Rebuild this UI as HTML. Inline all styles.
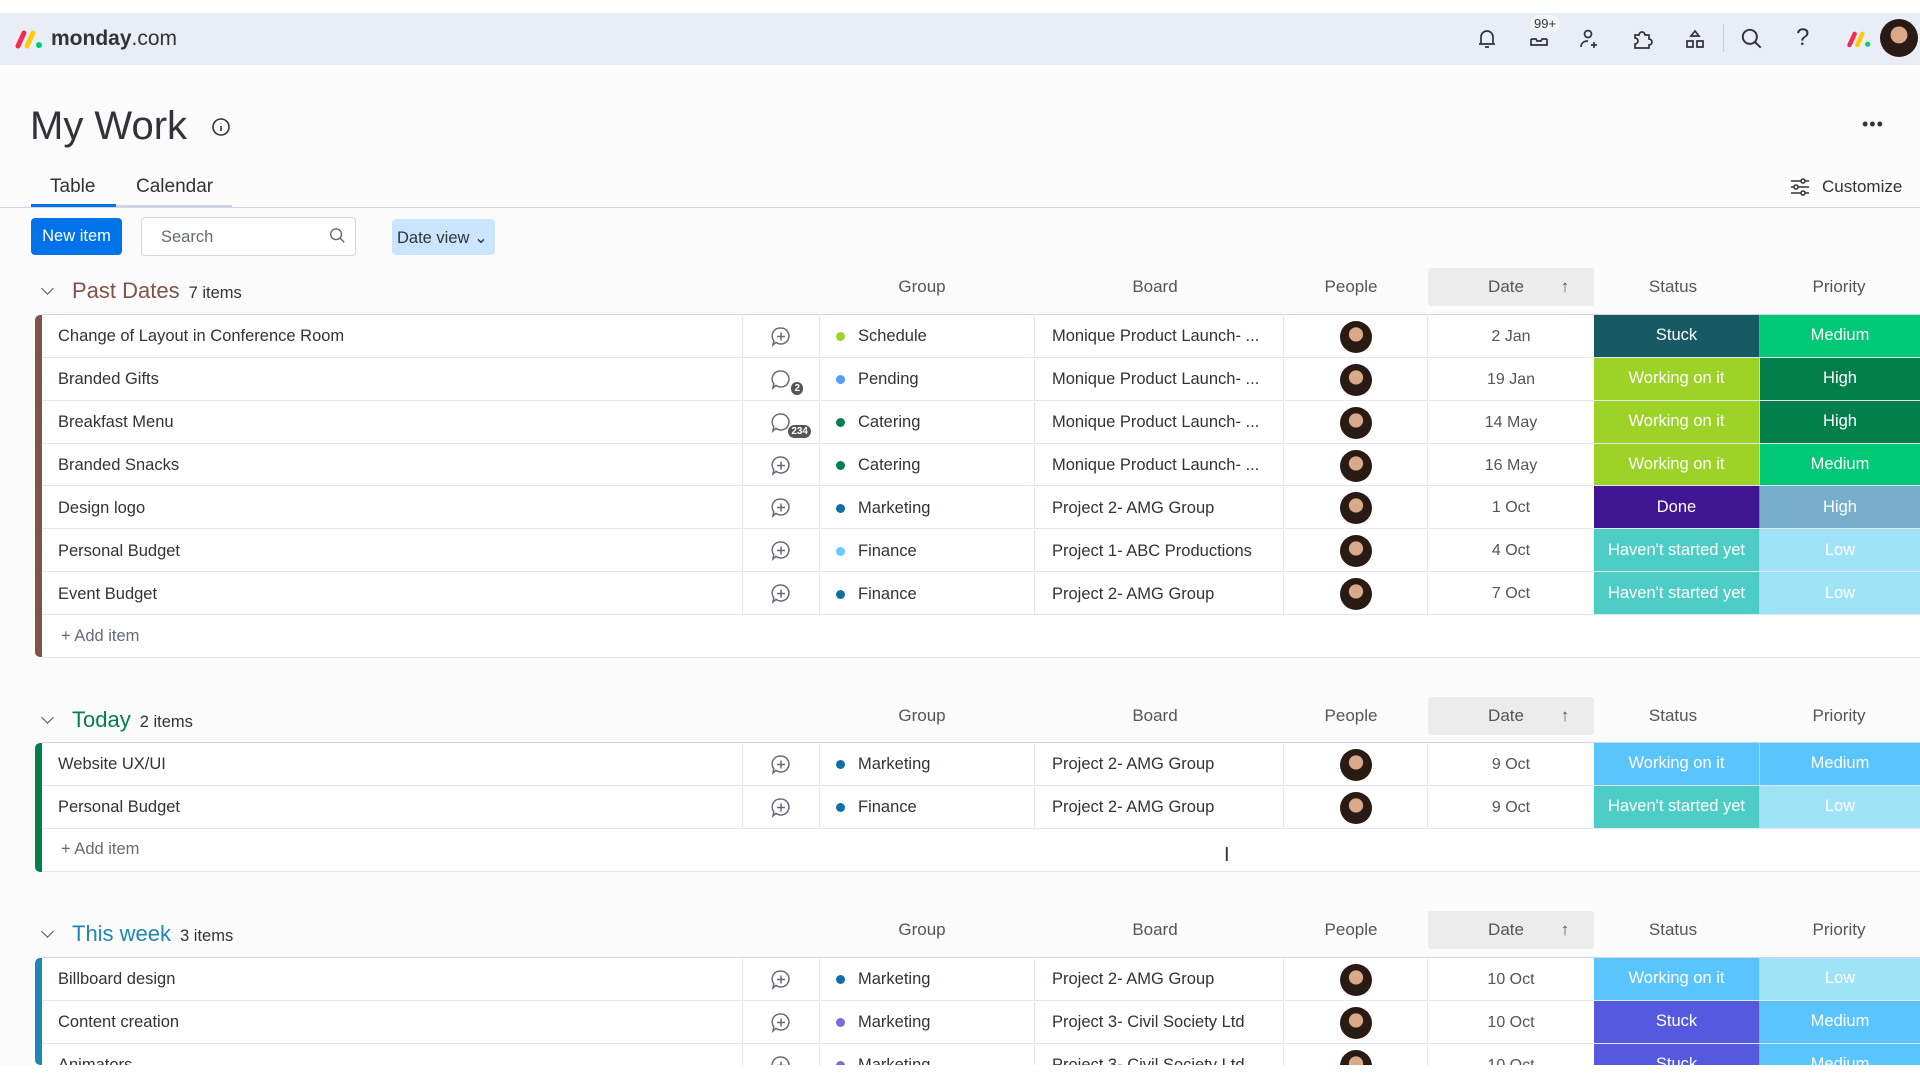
<!DOCTYPE html>
<html><head><meta charset="utf-8"><style>
*{box-sizing:border-box;margin:0;padding:0}
html,body{width:1920px;height:1080px;overflow:hidden}
body{background:#fff;font-family:"Liberation Sans",sans-serif;color:#323338;position:relative}
#wrap{position:absolute;left:0;top:0;width:1920px;height:1080px;overflow:hidden}
.top{position:absolute;left:0;top:13px;width:1920px;height:52px;background:#e9eef6}
.main{position:absolute;left:0;top:65px;width:1920px;height:1000px;background:#fbfbfc}
.abs{position:absolute}
.hdr{position:absolute;left:0;width:1920px;height:40px;font-size:17px;color:#555}
.hdr span{position:absolute;top:50%;transform:translate(-50%,-50%)}
.datebox{position:absolute;left:1428px;width:166px;height:38px;background:#ececec;border-radius:3px}
.row{position:absolute;left:42px;width:1878px;height:42.86px;border-bottom:1px solid #e3e6ee;background:#fff;font-size:16.5px}
.row>div{position:absolute;top:1px;height:100%;display:flex;align-items:center}
.c1{left:0;width:701px;padding-left:16px;border-right:1px solid #e3e6ee}
.c2{left:701px;width:77px;justify-content:center;border-right:1px solid #e3e6ee}
.c3{left:778px;width:215px;padding-left:16px;border-right:1px solid #e3e6ee}
.c4{left:993px;width:249px;padding-left:17px;border-right:1px solid #e3e6ee}
.c5{left:1242px;width:144px;justify-content:center;border-right:1px solid #e3e6ee}
.c6{left:1386px;width:166px;justify-content:center;color:#555;font-size:16px}
.c7{left:1552px;width:166px;justify-content:center;color:#fff;font-size:16.5px;border-right:1px solid rgba(255,255,255,.4)}
.c8{left:1718px;width:160px;justify-content:center;color:#fff;font-size:16.5px}
.row>.c7,.row>.c8{top:0}
.dot{width:9px;height:9px;border-radius:50%;margin-right:13px}
.av{width:32px;height:32px;border-radius:50%;background:radial-gradient(circle at 50% 42%,#d9a98a 0 28%,#2a1a14 30%)}
.add{position:absolute;left:42px;width:1878px;height:43px;background:#fff;border-bottom:1px solid #e3e6ee;font-size:16.5px;color:#676879;padding-left:19px;display:flex;align-items:center}
.bar{position:absolute;left:35px;width:7px;border-radius:5px 0 0 5px}
.gt{position:absolute;left:72px;font-size:22px;display:flex;align-items:baseline;gap:9px}
.gt small{font-size:16.5px;color:#323338}
.chev{position:absolute;left:43px;width:9px;height:9px;border-right:1.6px solid #555;border-bottom:1.6px solid #555;transform:rotate(45deg)}
svg{display:block}
.cb{position:relative;width:24px;height:24px}
.cb b{position:absolute;right:-10px;bottom:-3px;background:#555;color:#fff;font-size:10px;border-radius:7px;padding:1px 3px;font-weight:bold}
</style></head><body><div id="wrap">
<svg width="0" height="0" style="position:absolute"><defs><symbol id="cp" viewBox="0 0 24 24"><path d="M12 3a8 8 0 1 1-5 14.3L4 20l.8-4.2A8 8 0 0 1 12 3z" fill="none" stroke="#676879" stroke-width="1.5"/><path d="M12 7.5v8M8 11.5h8" stroke="#676879" stroke-width="1.5"/></symbol><symbol id="cc" viewBox="0 0 24 24"><path d="M12 3a8 8 0 1 1-5 14.3L4 20l.8-4.2A8 8 0 0 1 12 3z" fill="none" stroke="#676879" stroke-width="1.5"/></symbol></defs></svg>
<div class="top"></div>
<div class="abs" style="left:14px;top:27px;display:flex;align-items:center;gap:7px">
<svg width="30" height="22" viewBox="0 0 30 22"><line x1="4" y1="18" x2="10" y2="5" stroke="#f62b54" stroke-width="5" stroke-linecap="round"/><line x1="13" y1="18" x2="19" y2="5" stroke="#ffcc00" stroke-width="5" stroke-linecap="round"/><circle cx="25" cy="17" r="3" fill="#00ca72"/></svg>
<span style="font-size:21px;color:#333"><b>monday</b>.com</span></div>
<svg class="abs" style="left:1474px;top:27px" width="26" height="24" viewBox="0 0 24 24" fill="none" stroke="#323338" stroke-width="1.7"><path d="M6 17V10a6 6 0 0 1 12 0v7H6zM4 17h16M10 20h4"/></svg>
<svg class="abs" style="left:1526px;top:27px" width="26" height="24" viewBox="0 0 24 24" fill="none" stroke="#323338" stroke-width="1.7"><path d="M4 12v6h16v-6M4 12h5l1 2h4l1-2h5"/></svg>
<div class="abs" style="left:1530px;top:15px;background:#f3f5f9;border-radius:9px;padding:1px 4px;font-size:13px">99+</div>
<svg class="abs" style="left:1577px;top:27px" width="26" height="24" viewBox="0 0 24 24" fill="none" stroke="#323338" stroke-width="1.7"><circle cx="10" cy="7" r="3.5"/><path d="M3 20c0-4 3-6 7-6M16 15v6M13 18h6"/></svg>
<svg class="abs" style="left:1629px;top:27px" width="26" height="24" viewBox="0 0 24 24" fill="none" stroke="#323338" stroke-width="1.7"><path d="M5 8h4a3 3 0 0 1 6 0h4v4a3 3 0 0 1 0 6v3H5v-4a3 3 0 0 0 0-6z"/></svg>
<svg class="abs" style="left:1682px;top:27px" width="26" height="24" viewBox="0 0 24 24" fill="none" stroke="#323338" stroke-width="1.7"><path d="M12 4l4 5h-8zM4 14h6v6H4zM14 14h6v6h-6z"/></svg>
<div class="abs" style="left:1723px;top:24px;width:1px;height:28px;background:#c9ced8"></div>
<svg class="abs" style="left:1739px;top:26px" width="26" height="26" viewBox="0 0 24 24" fill="none" stroke="#323338" stroke-width="1.8"><circle cx="10" cy="10" r="6.5"/><path d="M15 15l5 5"/></svg>
<div class="abs" style="left:1796px;top:24px;font-size:24px;color:#323338">?</div>
<svg class="abs" style="left:1846px;top:28px" width="26" height="22" viewBox="0 0 30 22"><line x1="4" y1="18" x2="10" y2="5" stroke="#f62b54" stroke-width="5" stroke-linecap="round"/><line x1="13" y1="18" x2="19" y2="5" stroke="#ffcc00" stroke-width="5" stroke-linecap="round"/><circle cx="25" cy="17" r="3" fill="#00ca72"/></svg>
<div class="abs av" style="left:1880px;top:19px;width:38px;height:38px"></div>
<div class="main"></div>
<div class="abs" style="left:30px;top:104px;font-size:40px;color:#323338">My Work</div>
<svg class="abs" style="left:211px;top:117px" width="20" height="20" viewBox="0 0 20 20" fill="none" stroke="#323338" stroke-width="1.6"><circle cx="10" cy="10" r="8"/><path d="M10 9v5M10 6v.5"/></svg>
<div class="abs" style="left:1862px;top:114px;font-size:18px;letter-spacing:1px">•••</div>
<div class="abs" style="left:50px;top:176px;font-size:19px">Table</div>
<div class="abs" style="left:136px;top:176px;font-size:19px">Calendar</div>
<div class="abs" style="left:31px;top:204px;width:85px;height:3px;background:#0073ea"></div>
<div class="abs" style="left:116px;top:205px;width:116px;height:2px;background:#d0d4e4"></div>
<div class="abs" style="left:0;top:207px;width:1920px;height:1px;background:#d0d4e4"></div>
<svg class="abs" style="left:1790px;top:177px" width="20" height="20" viewBox="0 0 20 20" fill="none" stroke="#323338" stroke-width="1.5"><path d="M1 4h18M1 10h18M1 16h18"/><circle cx="13" cy="4" r="2" fill="#fff"/><circle cx="6" cy="10" r="2" fill="#fff"/><circle cx="13" cy="16" r="2" fill="#fff"/></svg>
<div class="abs" style="left:1822px;top:177px;font-size:17px">Customize</div>
<div class="abs" style="left:31px;top:218px;width:91px;height:37px;background:#0073ea;border-radius:4px;color:#fff;font-size:16.5px;display:flex;align-items:center;justify-content:center">New item</div>
<div class="abs" style="left:141px;top:217px;width:215px;height:39px;border:1px solid #d0d4e4;border-radius:4px;background:#fff;font-size:16.5px;color:#676879;padding:10px 19px">Search</div>
<svg class="abs" style="left:328px;top:227px" width="18" height="18" viewBox="0 0 20 20" fill="none" stroke="#676879" stroke-width="1.6"><circle cx="9" cy="8" r="6"/><path d="M13 12l5 5"/></svg>
<div class="abs" style="left:392px;top:219px;width:103px;height:36px;background:#cce5ff;border-radius:4px;font-size:16.5px;padding:9px 5px">Date view ⌄</div>

<!-- Past Dates -->
<div class="chev" style="top:284px"></div>
<div class="gt" style="top:278px;color:#7f5347">Past Dates<small>7 items</small></div>
<div class="datebox" style="top:268px"></div>
<div class="hdr" style="top:267px"><span style="left:922px">Group</span><span style="left:1155px">Board</span><span style="left:1351px">People</span><span style="left:1506px">Date</span><span style="left:1565px">↑</span><span style="left:1673px">Status</span><span style="left:1839px">Priority</span></div>
<div class="bar" style="top:315px;height:342px;background:#7f5347"></div>
<div class="abs" style="left:42px;top:314px;width:1878px;height:1px;background:#d0d4e4"></div>

<div class="row" style="top:315px"><div class="c1">Change of Layout in Conference Room</div><div class="c2"><svg width="24" height="24"><use href="#cp"/></svg></div><div class="c3"><i class="dot" style="background:#9cd326"></i>Schedule</div><div class="c4">Monique Product Launch- ...</div><div class="c5"><i class="av"></i></div><div class="c6">2 Jan</div><div class="c7" style="background:#175a63">Stuck</div><div class="c8" style="background:#00c875">Medium</div></div>
<div class="row" style="top:357.86px"><div class="c1">Branded Gifts</div><div class="c2"><div class="cb"><svg width="24" height="24"><use href="#cc"/></svg><b>2</b></div></div><div class="c3"><i class="dot" style="background:#579bfc"></i>Pending</div><div class="c4">Monique Product Launch- ...</div><div class="c5"><i class="av"></i></div><div class="c6">19 Jan</div><div class="c7" style="background:#9cd326">Working on it</div><div class="c8" style="background:#037f4c">High</div></div>
<div class="row" style="top:400.72px"><div class="c1">Breakfast Menu</div><div class="c2"><div class="cb"><svg width="24" height="24"><use href="#cc"/></svg><b style="right:-18px">234</b></div></div><div class="c3"><i class="dot" style="background:#037f4c"></i>Catering</div><div class="c4">Monique Product Launch- ...</div><div class="c5"><i class="av"></i></div><div class="c6">14 May</div><div class="c7" style="background:#9cd326">Working on it</div><div class="c8" style="background:#037f4c">High</div></div>
<div class="row" style="top:443.58px"><div class="c1">Branded Snacks</div><div class="c2"><svg width="24" height="24"><use href="#cp"/></svg></div><div class="c3"><i class="dot" style="background:#037f4c"></i>Catering</div><div class="c4">Monique Product Launch- ...</div><div class="c5"><i class="av"></i></div><div class="c6">16 May</div><div class="c7" style="background:#9cd326">Working on it</div><div class="c8" style="background:#00c875">Medium</div></div>
<div class="row" style="top:486.44px"><div class="c1">Design logo</div><div class="c2"><svg width="24" height="24"><use href="#cp"/></svg></div><div class="c3"><i class="dot" style="background:#0f6fa8"></i>Marketing</div><div class="c4">Project 2- AMG Group</div><div class="c5"><i class="av"></i></div><div class="c6">1 Oct</div><div class="c7" style="background:#401694">Done</div><div class="c8" style="background:#77aecc">High</div></div>
<div class="row" style="top:529.3px"><div class="c1">Personal Budget</div><div class="c2"><svg width="24" height="24"><use href="#cp"/></svg></div><div class="c3"><i class="dot" style="background:#66ccff"></i>Finance</div><div class="c4">Project 1- ABC Productions</div><div class="c5"><i class="av"></i></div><div class="c6">4 Oct</div><div class="c7" style="background:#4eccc6">Haven't started yet</div><div class="c8" style="background:#a1e3f6">Low</div></div>
<div class="row" style="top:572.16px"><div class="c1">Event Budget</div><div class="c2"><svg width="24" height="24"><use href="#cp"/></svg></div><div class="c3"><i class="dot" style="background:#0f6fa8"></i>Finance</div><div class="c4">Project 2- AMG Group</div><div class="c5"><i class="av"></i></div><div class="c6">7 Oct</div><div class="c7" style="background:#4eccc6">Haven't started yet</div><div class="c8" style="background:#a1e3f6">Low</div></div>
<div class="add" style="top:615px">+ Add item</div>

<!-- Today -->
<div class="chev" style="top:713px"></div>
<div class="gt" style="top:707px;color:#037f4c">Today<small>2 items</small></div>
<div class="datebox" style="top:697px"></div>
<div class="hdr" style="top:696px"><span style="left:922px">Group</span><span style="left:1155px">Board</span><span style="left:1351px">People</span><span style="left:1506px">Date</span><span style="left:1565px">↑</span><span style="left:1673px">Status</span><span style="left:1839px">Priority</span></div>
<div class="bar" style="top:743px;height:129px;background:#037f4c"></div>
<div class="abs" style="left:42px;top:742px;width:1878px;height:1px;background:#d0d4e4"></div>
<div class="row" style="top:743px"><div class="c1">Website UX/UI</div><div class="c2"><svg width="24" height="24"><use href="#cp"/></svg></div><div class="c3"><i class="dot" style="background:#0f6fa8"></i>Marketing</div><div class="c4">Project 2- AMG Group</div><div class="c5"><i class="av"></i></div><div class="c6">9 Oct</div><div class="c7" style="background:#5ac4fc">Working on it</div><div class="c8" style="background:#5ac4fc">Medium</div></div>
<div class="row" style="top:785.86px"><div class="c1">Personal Budget</div><div class="c2"><svg width="24" height="24"><use href="#cp"/></svg></div><div class="c3"><i class="dot" style="background:#0f6fa8"></i>Finance</div><div class="c4">Project 2- AMG Group</div><div class="c5"><i class="av"></i></div><div class="c6">9 Oct</div><div class="c7" style="background:#4eccc6">Haven't started yet</div><div class="c8" style="background:#a1e3f6">Low</div></div>
<div class="add" style="top:828.7px">+ Add item</div>
<div class="abs" style="left:1224px;top:844px;font-size:20px">I</div>

<!-- This week -->
<div class="chev" style="top:927px"></div>
<div class="gt" style="top:921px;color:#1f86b8">This week<small>3 items</small></div>
<div class="datebox" style="top:911px"></div>
<div class="hdr" style="top:910px"><span style="left:922px">Group</span><span style="left:1155px">Board</span><span style="left:1351px">People</span><span style="left:1506px">Date</span><span style="left:1565px">↑</span><span style="left:1673px">Status</span><span style="left:1839px">Priority</span></div>
<div class="bar" style="top:958px;height:107px;background:#1f86b8"></div>
<div class="abs" style="left:42px;top:957px;width:1878px;height:1px;background:#d0d4e4"></div>
<div class="row" style="top:958px"><div class="c1">Billboard design</div><div class="c2"><svg width="24" height="24"><use href="#cp"/></svg></div><div class="c3"><i class="dot" style="background:#0f6fa8"></i>Marketing</div><div class="c4">Project 2- AMG Group</div><div class="c5"><i class="av"></i></div><div class="c6">10 Oct</div><div class="c7" style="background:#5ac4fc">Working on it</div><div class="c8" style="background:#a1e3f6">Low</div></div>
<div class="row" style="top:1000.86px"><div class="c1">Content creation</div><div class="c2"><svg width="24" height="24"><use href="#cp"/></svg></div><div class="c3"><i class="dot" style="background:#7e6ad8"></i>Marketing</div><div class="c4">Project 3- Civil Society Ltd</div><div class="c5"><i class="av"></i></div><div class="c6">10 Oct</div><div class="c7" style="background:#5559df">Stuck</div><div class="c8" style="background:#5ac4fc">Medium</div></div>
<div class="row" style="top:1043.72px"><div class="c1">Animators</div><div class="c2"><svg width="24" height="24"><use href="#cp"/></svg></div><div class="c3"><i class="dot" style="background:#7e6ad8"></i>Marketing</div><div class="c4">Project 3- Civil Society Ltd</div><div class="c5"><i class="av"></i></div><div class="c6">10 Oct</div><div class="c7" style="background:#5559df">Stuck</div><div class="c8" style="background:#5ac4fc">Medium</div></div>
<div class="abs" style="left:0;top:1065px;width:1920px;height:15px;background:#fff;z-index:10"></div>
</div></body></html>
